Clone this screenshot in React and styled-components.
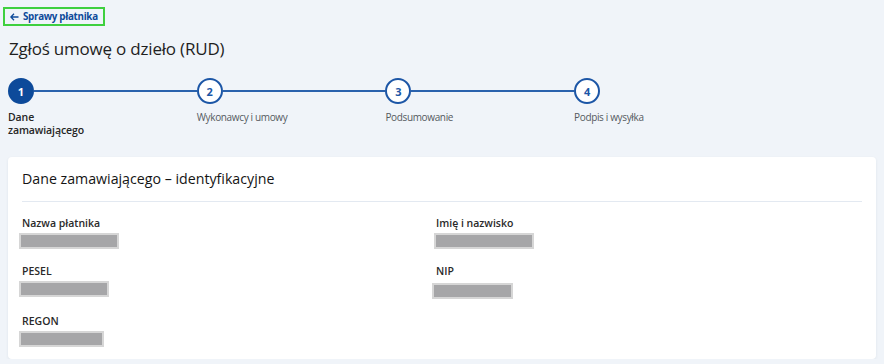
import React from "react";
import styled, { createGlobalStyle } from "styled-components";

const Global = createGlobalStyle`
  html, body { margin: 0; padding: 0; background: #f0f4f9; }
  body { font-family: "Open Sans", "Noto Sans", sans-serif; color: #1f1f1f; }
`;

const Page = styled.div`
  padding: 7px 8px 0 8px;
  display: flex;
  flex-direction: column;
`;

const BackLink = styled.a`
  align-self: flex-start;
  margin-left: -5px;
  height: 15px;
  padding: 0 5px 0 5px;
  border: 2px solid #3fd03f;
  display: flex;
  align-items: center;
  gap: 4px;
  color: #0d4a9a;
  font-size: 9.8px;
  letter-spacing: -0.3px;
  font-weight: 700;
  text-decoration: none;
  white-space: nowrap;
`;

const Arrow = styled.svg`
  width: 9px;
  height: 8px;
  flex: none;
`;

const Title = styled.h1`
  margin: 11px 0 0 1px;
  font-size: 17px;
  font-weight: 400;
  line-height: 24px;
  color: #1f1f1f;
  letter-spacing: -0.2px;
`;

const Stepper = styled.div`
  display: grid;
  grid-template-columns: repeat(3, 188.7px) 1fr;
  margin-top: 17px;
`;

const Step = styled.div`
  display: flex;
  flex-direction: column;
`;

const StepTop = styled.div`
  display: flex;
  align-items: center;
`;

const Circle = styled.div`
  box-sizing: border-box;
  width: 26px;
  height: 26px;
  border-radius: 50%;
  flex: none;
  display: flex;
  align-items: center;
  justify-content: center;
  font-size: 11px;
  font-weight: 700;
  border: 2px solid #1c56a6;
  background: ${(p) => (p.$active ? "#0d4a9a" : "#ffffff")};
  border-color: ${(p) => (p.$active ? "#0d4a9a" : "#1c56a6")};
  color: ${(p) => (p.$active ? "#ffffff" : "#1c56a6")};
`;

const Line = styled.div`
  flex: 1;
  height: 1.5px;
  background: #2a62ad;
`;

const StepLabel = styled.div`
  margin-top: 7px;
  max-width: 90px;
  font-size: ${(p) => (p.$active ? "10.5px" : "10px")};
  letter-spacing: ${(p) => (p.$active ? "-0.1px" : "-0.35px")};
  line-height: 13px;
  font-weight: ${(p) => (p.$active ? 600 : 400)};
  color: ${(p) => (p.$active ? "#262626" : "#555a60")};
  white-space: ${(p) => (p.$active ? "normal" : "nowrap")};
`;

const Card = styled.section`
  margin-top: 20px;
  background: #ffffff;
  border-radius: 4px;
  box-shadow: 0 1px 3px rgba(30, 50, 80, 0.08);
  padding: 12px 14px 12px 14px;
`;

const CardTitle = styled.h2`
  margin: 0;
  font-size: 14.2px;
  font-weight: 500;
  line-height: 20px;
  color: #141414;
  padding-bottom: 12px;
  border-bottom: 1.5px solid #e3e9f1;
`;

const Fields = styled.div`
  display: grid;
  grid-template-columns: 414px 1fr;
  row-gap: 15px;
  padding-top: 14px;
`;

const Field = styled.div`
  display: flex;
  flex-direction: column;
`;

const FieldLabel = styled.div`
  font-size: 10.5px;
  font-weight: 600;
  line-height: 14px;
  color: #2a2a2a;
`;

const Redacted = styled.div`
  box-sizing: border-box;
  margin-top: ${(p) => p.$top || 3}px;
  margin-left: ${(p) => p.$left || -3}px;
  width: ${(p) => p.$w}px;
  height: 16px;
  background: #a6a6a8;
  border: 2px solid #d6d6d6;
`;

const steps = [
  { n: 1, label: "Dane zamawiającego", active: true },
  { n: 2, label: "Wykonawcy i umowy" },
  { n: 3, label: "Podsumowanie" },
  { n: 4, label: "Podpis i wysyłka", last: true },
];

const fields = [
  { label: "Nazwa płatnika", w: 100 },
  { label: "Imię i nazwisko", w: 100, left: -2 },
  { label: "PESEL", w: 90 },
  { label: "NIP", w: 81, left: -4, top: 5 },
  { label: "REGON", w: 85 },
];

export default function App() {
  return (
    <>
      <Global />
      <Page>
        <BackLink href="#">
          <Arrow viewBox="0 0 9 8" fill="none" stroke="#0d4a9a" strokeWidth="1.3">
            <path d="M8.5 4H1M4 0.8L0.9 4L4 7.2" />
          </Arrow>
          <span>Sprawy płatnika</span>
        </BackLink>
        <Title>Zgłoś umowę o dzieło (RUD)</Title>
        <Stepper>
          {steps.map((s) => (
            <Step key={s.n}>
              <StepTop>
                <Circle $active={s.active}>{s.n}</Circle>
                {!s.last && <Line />}
              </StepTop>
              <StepLabel $active={s.active}>{s.label}</StepLabel>
            </Step>
          ))}
        </Stepper>
        <Card>
          <CardTitle>Dane zamawiającego – identyfikacyjne</CardTitle>
          <Fields>
            {fields.map((f) => (
              <Field key={f.label}>
                <FieldLabel>{f.label}</FieldLabel>
                <Redacted $w={f.w} $left={f.left} $top={f.top} />
              </Field>
            ))}
          </Fields>
        </Card>
      </Page>
    </>
  );
}
